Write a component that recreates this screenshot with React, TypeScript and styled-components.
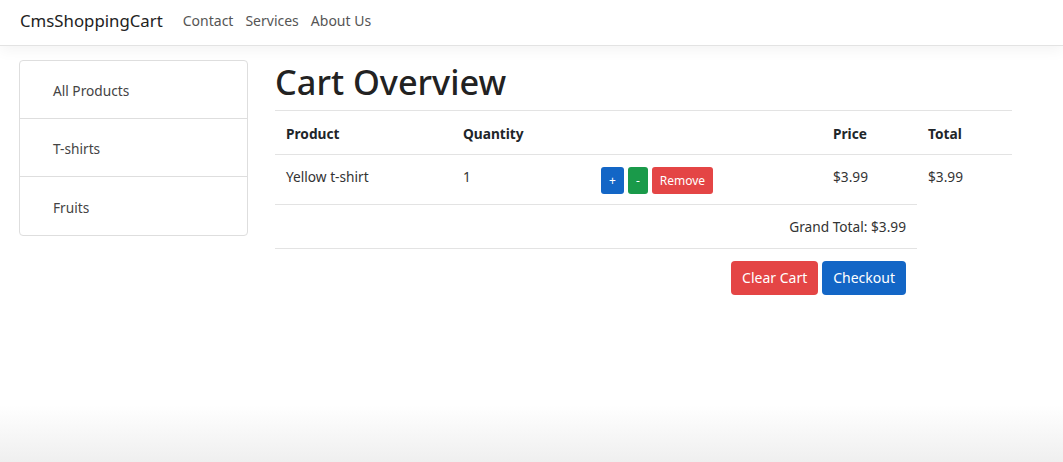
import styled, { createGlobalStyle } from "styled-components";

const GlobalStyle = createGlobalStyle`
	html, body {
		margin: 0;
		padding: 0;
	}
	body {
		min-height: 462px;
		font-family: "Noto Sans", "Open Sans", sans-serif;
		font-size: 13.7px;
		color: #212529;
		background: linear-gradient(to bottom, #ffffff 0px, #ffffff 405px, #efefef 462px);
	}
	* {
		box-sizing: border-box;
	}
`;

const Navbar = styled.nav`
	height: 46px;
	display: flex;
	align-items: center;
	padding: 0 20px;
	background-color: #ffffff;
	border-bottom: 1px solid #e3e3e3;
	box-shadow: 0 4px 14px rgba(0, 0, 0, 0.05);
`;

const Brand = styled.a`
	font-size: 16.8px;
	color: #222;
	margin-right: 20px;
	margin-top: -5px;
`;

const NavLink = styled.a`
	font-size: 14px;
	color: #555;
	margin-right: 12px;
	margin-top: -5px;
`;

const Page = styled.div`
	display: flex;
	align-items: flex-start;
	gap: 27px;
	padding: 14px 0 0 19px;
`;

const Sidebar = styled.ul`
	width: 229px;
	margin: 0;
	padding: 0;
	list-style: none;
	border: 1px solid #dedede;
	border-radius: 4px;
	background: #fff;
`;

const SideItem = styled.li<{ last?: boolean }>`
	height: ${(props) => (props.last ? "58px" : "58px")};
	display: flex;
	align-items: center;
	padding: 2px 0 0 33px;
	font-size: 13.7px;
	color: #444;
	border-bottom: ${(props) => (props.last ? "none" : "1px solid #dedede")};
`;

const Main = styled.div`
	width: 737px;
`;

const Title = styled.h1`
	margin: 4px 0 10px;
	font-size: 34.3px;
	font-weight: 500;
	line-height: 36px;
	color: #222;
`;

const Table = styled.table`
	width: 100%;
	border-collapse: collapse;
	table-layout: fixed;
`;

const Th = styled.th<{ w: number }>`
	width: ${(props) => props.w}px;
	text-align: left;
	font-weight: 700;
	font-size: 13.7px;
	height: 44px;
	padding: 1px 11px 0;
	border-top: 1px solid #e3e3e3;
	border-bottom: 1px solid #e3e3e3;
	color: #212529;
`;

const Td = styled.td<{ right?: boolean; h?: number; top?: boolean }>`
	height: ${(props) => props.h || 50}px;
	padding: ${(props) => (props.top ? "12px 11px 0" : "0 11px")};
	font-size: 13.7px;
	line-height: 20px;
	color: #333;
	text-align: ${(props) => (props.right ? "right" : "left")};
	vertical-align: ${(props) => (props.top ? "top" : "middle")};
`;

const BorderRow = styled.tr`
	td.wide {
		border-bottom: 1px solid #e3e3e3;
	}
`;

const SmallBtn = styled.button<{ color: string }>`
	height: 27px;
	padding: 0 8px;
	margin-right: 4px;
	border: none;
	border-radius: 3px;
	background-color: ${(props) => props.color};
	color: #fff;
	font-family: inherit;
	font-size: 12px;
	vertical-align: top;
`;

const BigBtn = styled.button<{ color: string }>`
	height: 34px;
	padding: 0 11px;
	margin-left: 4px;
	border: none;
	border-radius: 4px;
	background-color: ${(props) => props.color};
	color: #fff;
	font-family: inherit;
	font-size: 14px;
`;

const blue = "#1366c6";
const green = "#1a9a4a";
const red = "#e44545";

function App() {
	return (
		<>
			<GlobalStyle />
			<Navbar>
				<Brand>CmsShoppingCart</Brand>
				<NavLink>Contact</NavLink>
				<NavLink>Services</NavLink>
				<NavLink>About Us</NavLink>
			</Navbar>
			<Page>
				<Sidebar>
					<SideItem>All Products</SideItem>
					<SideItem>T-shirts</SideItem>
					<SideItem last>Fruits</SideItem>
				</Sidebar>
				<Main>
					<Title>Cart Overview</Title>
					<Table>
						<thead>
							<tr>
								<Th w={177}>Product</Th>
								<Th w={138}>Quantity</Th>
								<Th w={232}></Th>
								<Th w={95}>Price</Th>
								<Th w={95}>Total</Th>
							</tr>
						</thead>
						<tbody>
							<BorderRow>
								<Td className="wide" top>Yellow t-shirt</Td>
								<Td className="wide" top>1</Td>
								<Td className="wide" top>
									<SmallBtn color={blue}>+</SmallBtn>
									<SmallBtn color={green}>-</SmallBtn>
									<SmallBtn color={red}>Remove</SmallBtn>
								</Td>
								<Td className="wide" top>$3.99</Td>
								<Td top>$3.99</Td>
							</BorderRow>
							<BorderRow>
								<Td className="wide" colSpan={4} right h={44}>
									Grand Total: $3.99
								</Td>
								<Td h={44}></Td>
							</BorderRow>
							<tr>
								<Td colSpan={4} right h={58}>
									<BigBtn color={red}>Clear Cart</BigBtn>
									<BigBtn color={blue}>Checkout</BigBtn>
								</Td>
								<Td h={58}></Td>
							</tr>
						</tbody>
					</Table>
				</Main>
			</Page>
		</>
	);
}

export default App;
